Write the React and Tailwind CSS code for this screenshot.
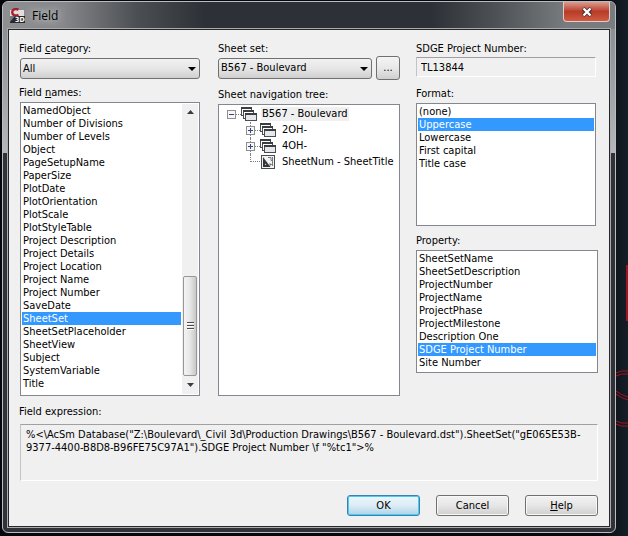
import { useState } from 'react';

const FIELD_NAMES = [
  'NamedObject',
  'Number of Divisions',
  'Number of Levels',
  'Object',
  'PageSetupName',
  'PaperSize',
  'PlotDate',
  'PlotOrientation',
  'PlotScale',
  'PlotStyleTable',
  'Project Description',
  'Project Details',
  'Project Location',
  'Project Name',
  'Project Number',
  'SaveDate',
  'SheetSet',
  'SheetSetPlaceholder',
  'SheetView',
  'Subject',
  'SystemVariable',
  'Title',
];

const FORMATS = ['(none)', 'Uppercase', 'Lowercase', 'First capital', 'Title case'];

const PROPERTIES = [
  'SheetSetName',
  'SheetSetDescription',
  'ProjectNumber',
  'ProjectName',
  'ProjectPhase',
  'ProjectMilestone',
  'Description One',
  'SDGE Project Number',
  'Site Number',
];

const EXPRESSION =
  '%<\\AcSm Database("Z:\\Boulevard\\_Civil 3d\\Production Drawings\\B567 - Boulevard.dst").SheetSet("gE065E53B-9377-4400-B8D8-B96FE75C97A1").SDGE Project Number \\f "%tc1">%';

function AppIcon() {
  return (
    <svg className="h-4 w-4 shrink-0" viewBox="0 0 16 16" aria-hidden="true">
      <path d="M0 2h14v6H0z" fill="#e6dcdd" />
      <path d="M0 8h15v7H0z" fill="#25272b" />
      <path d="M0 8h5l-5 6z" fill="#77797c" />
      <path d="M8.500 1.600C5 0 2.200 1.500 2.200 4.300S5 8.200 8.500 6.800" fill="none" stroke="#a3222c" strokeWidth="2.400" />
      <text x="5" y="14" fontSize="7" fontWeight="bold" fill="#fff">3D</text>
    </svg>
  );
}

function Arrow({ up }) {
  return (
    <svg className="h-[4px] w-[7px]" viewBox="0 0 7 4" aria-hidden="true">
      <path d={up ? 'M0 4L3.500 0L7 4z' : 'M0 0h7L3.500 4z'} fill="#3c3c3c" />
    </svg>
  );
}

function DropDown({ id, options }) {
  return (
    <div className="relative min-w-0 flex-1">
      <select
        id={id}
        className="block h-[21px] w-full appearance-none rounded-[3px] border border-[#707070] bg-linear-to-b from-[#f1f1f1] via-[#e6e6e6] to-[#cfcfcf] pr-5 pl-[2px] text-[11px] text-black outline-none"
      >
        {options.map((o) => (
          <option key={o}>{o}</option>
        ))}
      </select>
      <svg className="pointer-events-none absolute top-[9px] right-1 h-[4px] w-2" viewBox="0 0 8 4" aria-hidden="true">
        <path d="M0 0h8L4 4z" fill="#000" />
      </svg>
    </div>
  );
}

function ListBox({ labelId, items, value, onChange, scrollbar, className = '' }) {
  return (
    <div className={`flex border border-[#828790] bg-white p-px ${className}`}>
      <ul role="listbox" aria-labelledby={labelId} className="min-w-0 flex-1">
        {items.map((item) => (
          <li
            key={item}
            role="option"
            aria-selected={item === value}
            onClick={() => onChange(item)}
            className={`h-[13px] cursor-default truncate pl-px leading-[13px] ${
              item === value ? 'bg-[#3399ff] text-white' : 'text-black'
            }`}
          >
            {item}
          </li>
        ))}
      </ul>
      {scrollbar}
    </div>
  );
}

function ScrollBar() {
  return (
    <div className="ml-px flex w-4 flex-col items-center bg-[#f0f0f0]" aria-hidden="true">
      <div className="flex h-4 items-center justify-center">
        <Arrow up />
      </div>
      <div className="flex-1"></div>
      <div className="flex h-[100px] w-[14px] flex-col items-center justify-center gap-px rounded-[2px] border border-[#979797] bg-linear-to-r from-[#f4f4f4] via-[#e6e6e6] to-[#c8c8c8]">
        <div className="h-[2px] w-[7px] border-t border-[#4b4b4b] bg-white"></div>
        <div className="h-[2px] w-[7px] border-t border-[#4b4b4b] bg-white"></div>
        <div className="h-[2px] w-[7px] border-t border-[#4b4b4b] bg-white"></div>
      </div>
      <div className="flex h-[18px] items-center justify-center">
        <Arrow />
      </div>
    </div>
  );
}

function Toggle({ open }) {
  return (
    <svg className="h-[9px] w-[9px] shrink-0" viewBox="0 0 9 9" aria-hidden="true">
      <rect x="0.500" y="0.500" width="8" height="8" fill="#f6f6f6" stroke="#8f8f8f" />
      <path d={open ? 'M2 4.500h5' : 'M2 4.500h5M4.500 2v5'} stroke="#34447c" />
    </svg>
  );
}

function SheetsIcon() {
  return (
    <svg className="h-4 w-4 shrink-0" viewBox="0 0 16 16" aria-hidden="true">
      <rect x="0.500" y="1.500" width="10" height="8" fill="#fff" stroke="#4a4d50" />
      <path d="M0 2h11" stroke="#3b3e41" strokeWidth="2" />
      <rect x="2.500" y="4.500" width="10" height="8" fill="#fff" stroke="#4a4d50" />
      <path d="M2 5h11" stroke="#3b3e41" strokeWidth="2" />
      <rect x="4.500" y="7.500" width="11" height="7" fill="#e4e8ec" stroke="#4a4d50" />
      <path d="M4 8h12" stroke="#3b3e41" strokeWidth="2" />
    </svg>
  );
}

function SheetIcon() {
  return (
    <svg className="h-4 w-4 shrink-0" viewBox="0 0 16 16" aria-hidden="true">
      <rect x="1.500" y="1.500" width="13" height="13" fill="#f3f3f3" stroke="#4a4d50" />
      <path d="M3 3v10h7.500z" fill="#34373a" />
      <path d="M5 9.500v1.500h1.500z" fill="#f3f3f3" />
      <path d="M8 3.500h3v3M11 6.500h2M10 9v3M10 10.500h3M12.500 3v9" fill="none" stroke="#777b80" />
    </svg>
  );
}

function Dots() {
  return <span className="w-[5px] shrink-0 border-t border-dotted border-[#808080]"></span>;
}

function SheetTree({ labelId }) {
  return (
    <ul role="tree" aria-labelledby={labelId} className="flex-1 border border-[#828790] bg-white py-px pl-2">
      <li role="treeitem" aria-expanded="true">
        <div className="flex h-4 items-center">
          <Toggle open />
          <Dots />
          <SheetsIcon />
          <span className="ml-1 bg-[#f0f0f0] px-px leading-[14px]">B567 - Boulevard</span>
        </div>
        <ul role="group" className="pl-[19px]">
          {['2OH-', '4OH-'].map((name) => (
            <li key={name} role="treeitem" aria-expanded="false" className="flex h-4 items-center">
              <span className="flex h-4 flex-col items-center">
                <span className="flex-1 border-l border-dotted border-[#808080]"></span>
                <Toggle />
                <span className="flex-1 border-l border-dotted border-[#808080]"></span>
              </span>
              <Dots />
              <SheetsIcon />
              <span className="ml-[6px]">{name}</span>
            </li>
          ))}
          <li role="treeitem" className="flex h-4 items-center pl-1">
            <span className="mb-2 h-2 w-[10px] border-b border-l border-dotted border-[#808080]"></span>
            <SheetIcon />
            <span className="ml-[6px] whitespace-nowrap">SheetNum - SheetTitle</span>
          </li>
        </ul>
      </li>
    </ul>
  );
}

function PushButton({ primary, children }) {
  return (
    <button
      type="button"
      className={`h-[21px] w-[73px] rounded-[3px] border text-center ${
        primary
          ? 'border-[#3c7fb1] bg-linear-to-b from-[#eef6fa] via-[#dcecf5] to-[#abd4ea] shadow-[inset_0_0_0_1px_#48cdf0]'
          : 'border-[#707070] bg-linear-to-b from-[#f2f2f2] via-[#e6e6e6] to-[#cfcfcf] shadow-[inset_0_0_0_1px_#f8f8f8]'
      }`}
    >
      {children}
    </button>
  );
}

export default function App() {
  const [fieldName, setFieldName] = useState('SheetSet');
  const [format, setFormat] = useState('Uppercase');
  const [property, setProperty] = useState('SDGE Project Number');

  return (
    <div className="relative flex min-h-screen bg-linear-to-r from-[#06070d] from-95% to-[#151f27] pt-px pr-3 pb-[3px] pl-[2px] font-['DejaVu_Sans_Condensed','DejaVu_Sans',sans-serif] text-[11px] leading-[14px] text-black">
      {/* drawing canvas lines behind the dialog */}
      <svg className="absolute top-[260px] right-0 h-[180px] w-3" viewBox="0 0 12 180" fill="none" stroke="#a01420" aria-hidden="true">
        <path d="M11 5v56" strokeWidth="2" />
        <path d="M0 113q5-3 12-2M0 116q5-3 12-2M0 131q5 4 12 6M0 134q5 4 12 6M0 161q5 3 12 2M0 164q5 3 12 2" />
      </svg>

      <div className="relative flex flex-1 flex-col rounded-[6px] border border-[#b9bdc1] bg-linear-to-b from-[#85888b] from-0% via-[#b4b6b8] via-[151px] to-[#303238] to-[151px] px-[5px] pb-[5px]">
        <header className="-mx-[5px] flex h-[27px] items-center gap-[6px] rounded-t-[5px] bg-[linear-gradient(to_right,#8d8f91_0%,#85878a_10%,#4b4e52_22%,#2d3036_33%,#2d3036_70%,#4c4f53_80%,#797c7e_92%)] pr-[5px] pl-[7px]">
          <AppIcon />
          <h1 className="flex-1 font-['Open_Sans','Noto_Sans',sans-serif] text-[12px] text-black [text-shadow:0_0_10px_#ddd,0_0_8px_#bbb]">Field</h1>
          <button
            type="button"
            aria-label="Close"
            className="flex h-5 w-[47px] items-center justify-center self-start rounded-b-[4px] border border-t-0 border-[#e3cbc8] bg-linear-to-b from-[#d99b90] from-0% via-[#b93a28] via-50% to-[#cf5b42]"
          >
            <svg className="h-[10px] w-3" viewBox="0 0 12 10" aria-hidden="true">
              <path d="M2 1.500L10 8.500M10 1.500L2 8.500" stroke="#4d2a2a" strokeWidth="4" />
              <path d="M2.500 1.500L9.500 8.500M9.500 1.500L2.500 8.500" stroke="#fff" strokeWidth="2.400" />
            </svg>
          </button>
        </header>

        <main className="flex flex-1 flex-col border border-[#25272b] bg-[#f0f0f0] pt-3 pr-[11px] pb-[10px] pl-[11px] outline outline-[#a8acae]">
          <div className="grid grid-cols-3 gap-4">
            <section className="flex flex-col pr-[2px]">
              <label htmlFor="category" className="-ml-px mb-[2px]">
                Field <u>c</u>ategory:
              </label>
              <DropDown id="category" options={['All']} />
              <h2 id="names-label" className="-ml-px mt-[7px] mb-[2px]">
                Field <u>n</u>ames:
              </h2>
              <ListBox
                labelId="names-label"
                items={FIELD_NAMES}
                value={fieldName}
                onChange={setFieldName}
                scrollbar={<ScrollBar />}
                className="h-[294px]"
              />
            </section>

            <section className="flex flex-col">
              <label htmlFor="sheetset">Sheet set:</label>
              <div className="flex items-center gap-1">
                <DropDown id="sheetset" options={['B567 - Boulevard']} />
                <button
                  type="button"
                  aria-label="Browse"
                  className="h-6 w-6 rounded-[3px] border border-[#707070] bg-linear-to-b from-[#f4f4f4] via-[#e8e8e8] to-[#cfcfcf]"
                >
                  ...
                </button>
              </div>
              <h2 id="tree-label" className="mt-2 mb-[2px]">
                Sheet navigation tree:
              </h2>
              <SheetTree labelId="tree-label" />
            </section>

            <section className="flex flex-col">
              <label htmlFor="value" className="mb-px">
                SDGE Project Number:
              </label>
              <input
                id="value"
                readOnly
                value="TL13844"
                className="mr-[2px] h-5 border border-t-[#a0a0a0] border-r-white border-b-white border-l-[#c4c4c4] bg-[#f0f0f0] px-1 outline-none"
              />
              <h2 id="format-label" className="mt-[10px] mb-[2px]">
                Format:
              </h2>
              <ListBox
                labelId="format-label"
                items={FORMATS}
                value={format}
                onChange={setFormat}
                className="mr-[2px] h-[123px]"
              />
              <h2 id="property-label" className="mt-2 mb-[2px]">
                Property:
              </h2>
              <ListBox
                labelId="property-label"
                items={PROPERTIES}
                value={property}
                onChange={setProperty}
                className="h-[123px]"
              />
            </section>
          </div>

          <label htmlFor="expression" className="-ml-px mt-[9px] mb-[5px]">
            Field expression:
          </label>
          <textarea
            id="expression"
            readOnly
            value={EXPRESSION}
            className="h-[57px] w-full resize-none overflow-hidden border border-t-[#a0a0a0] border-r-white border-b-white border-l-[#c4c4c4] bg-[#f0f0f0] px-[5px] py-[3px] leading-[13px] outline-none"
          />

          <footer className="mt-auto flex justify-end gap-4">
            <PushButton primary>OK</PushButton>
            <PushButton>Cancel</PushButton>
            <PushButton>
              <u>H</u>elp
            </PushButton>
          </footer>
        </main>
      </div>
    </div>
  );
}
